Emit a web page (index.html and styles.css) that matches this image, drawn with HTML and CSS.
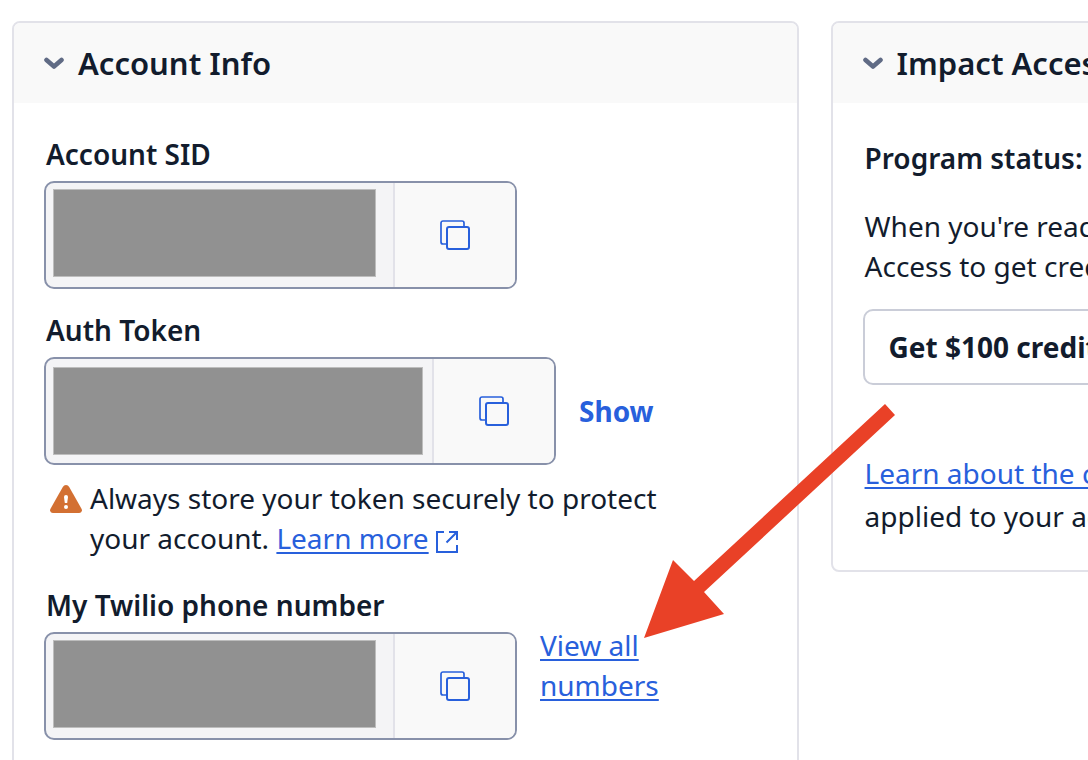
FILE: index.html
```html
<!DOCTYPE html>
<html lang="en">
<head>
    <meta charset="UTF-8">
    <meta name="viewport" content="width=device-width, initial-scale=1.0">
    <title>Account Dashboard</title>
    <link rel="stylesheet" href="styles.css">
</head>
<body>

    <!-- Shared icons -->
    <svg class="sprite" aria-hidden="true">
        <symbol id="icon-copy" viewBox="0 0 30 30">
            <path d="M6 24H3a2 2 0 0 1-2-2V3a2 2 0 0 1 2-2h19a2 2 0 0 1 2 2v3" fill="none" stroke="currentColor" stroke-width="1.700"/>
            <rect x="7" y="7" width="22" height="22" rx="2" fill="none" stroke="currentColor" stroke-width="2"/>
        </symbol>
        <symbol id="icon-chevron" viewBox="0 0 20 13">
            <path d="M2.500 3L10 9.500L17.500 3" fill="none" stroke="currentColor" stroke-width="4.600" stroke-linecap="round" stroke-linejoin="round"/>
        </symbol>
    </svg>

    <main class="dashboard">
        <section class="card">
            <header class="card-header">
                <svg class="chevron"><use href="#icon-chevron"/></svg>
                <h2>Account Info</h2>
            </header>
            <div class="card-body">
                <!-- Account SID -->
                <div class="field">
                    <label for="account-sid">Account SID</label>
                    <div class="field-row">
                        <div class="copy-box">
                            <input type="text" id="account-sid" class="masked" readonly>
                            <button type="button" class="copy-button" aria-label="Copy Account SID">
                                <svg class="copy-icon"><use href="#icon-copy"/></svg>
                            </button>
                        </div>
                    </div>
                </div>

                <!-- Auth Token -->
                <div class="field">
                    <label for="auth-token">Auth Token</label>
                    <div class="field-row">
                        <div class="copy-box token-box">
                            <input type="text" id="auth-token" class="masked" readonly>
                            <button type="button" class="copy-button" aria-label="Copy Auth Token">
                                <svg class="copy-icon"><use href="#icon-copy"/></svg>
                            </button>
                        </div>
                        <button type="button" class="show-button">Show</button>
                    </div>
                    <div class="help">
                        <svg class="warning-icon" viewBox="0 0 32 28">
                            <path d="M12.800 1.900a3.700 3.700 0 0 1 6.400 0l12.300 21.800c1.100 2-.2 4.300-2.500 4.300H3C.7 28-.6 25.700.5 23.700z" fill="#d37032"/>
                            <path d="M14 12a2 2 0 0 1 4 0l-.8 6h-2.400z" fill="#fff"/>
                            <circle cx="16" cy="22" r="2" fill="#fff"/>
                        </svg>
                        <p>Always store your token securely to protect your account.
                            <a href="#">Learn more</a>
                            <svg class="external-icon" viewBox="0 0 22 22" fill="none" stroke="currentColor" stroke-width="2">
                                <path d="M8 1H1v20h20v-7M10.500 11.500L20.500 1.500M13 1h8v8"/>
                            </svg>
                        </p>
                    </div>
                </div>

                <!-- Phone number -->
                <div class="field">
                    <label for="phone-number">My Twilio phone number</label>
                    <div class="field-row">
                        <div class="copy-box">
                            <input type="text" id="phone-number" class="masked" readonly>
                            <button type="button" class="copy-button" aria-label="Copy phone number">
                                <svg class="copy-icon"><use href="#icon-copy"/></svg>
                            </button>
                        </div>
                        <a href="#" class="view-all">View all numbers</a>
                    </div>
                </div>
            </div>
        </section>

        <section class="card impact">
            <header class="card-header">
                <svg class="chevron"><use href="#icon-chevron"/></svg>
                <h2>Impact Access</h2>
            </header>
            <div class="card-body">
                <p class="status">Program status:</p>
                <p class="intro">When you're ready<br>Access to get credit</p>
                <button type="button" class="credit-button">Get $100 credit</button>
                <p class="learn"><a href="#">Learn about the credit</a><br>applied to your account</p>
            </div>
        </section>

        <!-- Arrow pointing at the numbers link -->
        <svg class="arrow" viewBox="0 0 252 235" aria-hidden="true">
            <path d="M0 235L29 157L50 178L241 1L251 12L60 189L80 211z" fill="#e94127"/>
        </svg>
    </main>

</body>
</html>
```
FILE: styles.css
```css
* {
    box-sizing: border-box;
}
body {
    margin: 0;
    background: #fff;
    color: #121c2d;
    font-family: "Noto Sans", sans-serif;
    font-size: 28px;
    line-height: 40px;
}
h2, p {
    margin: 0;
}
a {
    color: #2860dc;
    text-decoration-thickness: 2px;
    text-underline-offset: 3px;
}
button {
    font: inherit;
    cursor: pointer;
}
.sprite {
    display: none;
}
.dashboard {
    position: relative;
    display: flex;
    align-items: flex-start;
    gap: 32px;
    height: 100vh;
    padding: 21px 0 0 12px;
    overflow: hidden;
}
.card {
    flex: 0 0 73.1%;
    border: 2px solid #e2e2e9;
    border-radius: 8px;
}
.card-header {
    display: flex;
    align-items: center;
    gap: 14px;
    height: 80px;
    padding: 0 30px;
    background: #f9f9f9;
    border-radius: 6px 6px 0 0;
}
.card-header h2 {
    font-size: 31px;
    font-weight: 600;
    white-space: nowrap;
}
.chevron {
    width: 20px;
    height: 13px;
    color: #606b85;
}
.card-body {
    padding: 30px;
}
.field {
    margin-bottom: 20px;
}
.field label {
    display: block;
    margin: 0 2px;
    padding: 1px 0 7px;
    font-weight: 600;
}
.field-row {
    display: flex;
    align-items: flex-start;
    gap: 23px;
}
.copy-box {
    display: flex;
    height: 108px;
    background: #f4f4f6;
    border: 2px solid #8891aa;
    border-radius: 10px;
    overflow: hidden;
}
.masked {
    width: 323px;
    height: 88px;
    margin: 6px 17px 10px 7px;
    padding: 0;
    background: #919191;
    border: 1px solid #bdbdbd;
}
.token-box .masked {
    width: 370px;
    margin: 8px 9px 8px 7px;
}
.copy-button {
    display: flex;
    align-items: center;
    justify-content: center;
    width: 122px;
    padding: 0;
    background: #f9f9f9;
    border: none;
    border-left: 2px solid #e2e2e9;
    color: #2860dc;
}
.copy-icon {
    width: 30px;
    height: 30px;
}
.show-button {
    align-self: center;
    padding: 0;
    background: none;
    border: none;
    color: #2860dc;
    font-weight: 700;
}
.help {
    display: flex;
    gap: 8px;
    max-width: 640px;
    padding: 13px 0 6px 6px;
}
.warning-icon {
    flex: none;
    width: 32px;
    height: 28px;
    margin-top: 7px;
}
.external-icon {
    width: 22px;
    height: 22px;
    color: #2860dc;
    vertical-align: -4px;
}
.view-all {
    max-width: 140px;
    margin-top: -7px;
}
.impact .card-body {
    padding-top: 35px;
    padding-left: 32px;
    white-space: nowrap;
}
.status {
    font-weight: 600;
}
.intro {
    margin-top: 28px;
}
.credit-button {
    height: 76px;
    margin: 23px 0 0 -2px;
    padding: 0 24px;
    background: #fff;
    border: 2px solid #cacdd8;
    border-radius: 10px;
    color: #121c2d;
    font-weight: 700;
}
.learn {
    margin-top: 67px;
    line-height: 43px;
    padding-bottom: 2px;
}
.arrow {
    position: absolute;
    top: 403px;
    left: 644px;
    width: 252px;
    height: 235px;
}
```
